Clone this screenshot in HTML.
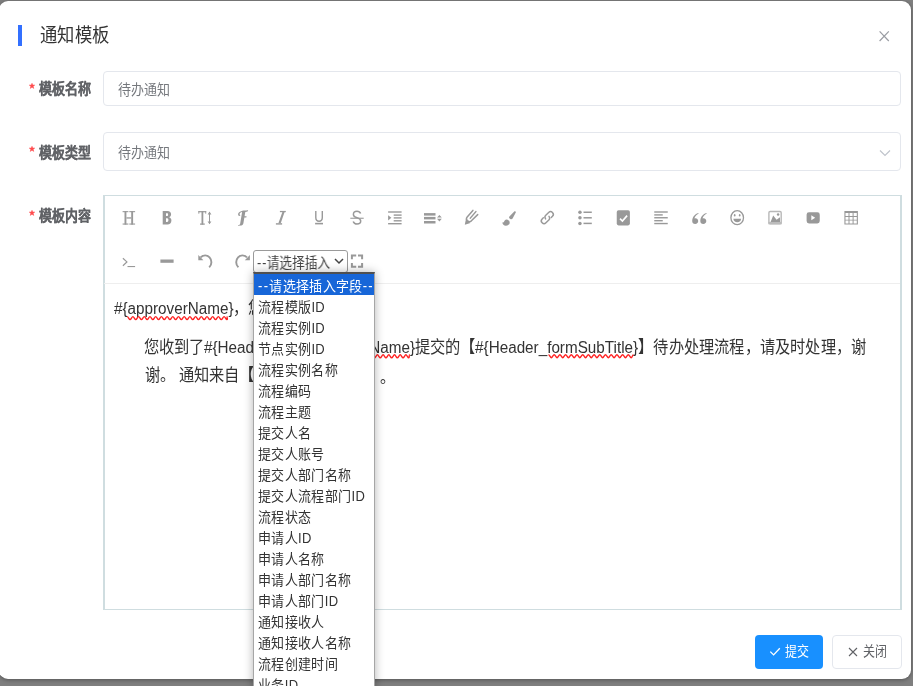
<!DOCTYPE html>
<html lang="zh-CN"><head><meta charset="utf-8">
<style>
*{margin:0;padding:0;box-sizing:border-box}
html,body{width:913px;height:686px;overflow:hidden}
body{background:#7f7f7f;font-family:"Liberation Sans",sans-serif;position:relative}
.abs{position:absolute}
.t{transform:scaleY(1.12);transform-origin:0 50%;will-change:transform}
#modal{position:absolute;left:-1px;top:1px;width:912px;height:678px;background:#fff;border-radius:9px;box-shadow:0 1px 4px rgba(0,0,0,.35)}
.bar{left:18px;top:24.5px;width:3.8px;height:21.5px;background:#3370ff}
.title{left:40px;top:22px;font-size:17px;line-height:26px;color:#333;white-space:nowrap}
.lbl{font-size:13px;font-weight:bold;color:#606266;-webkit-text-stroke:.12px #606266;white-space:nowrap;line-height:20px}
.star{color:#f56c6c;font-size:14px;line-height:20px}
.inp{left:103px;width:798px;border:1px solid #e4e7ed;border-radius:4px;background:#fff}
.itxt{font-size:13px;color:#75787d;white-space:nowrap;line-height:20px}
#editor{left:103px;top:195px;width:799px;height:415px;border:1px solid #cfdde0;border-left-width:2px;border-right-width:2px}
.sep{left:104px;top:283px;width:796px;height:1px;background:#eee}
.ic{position:absolute}
.ctext{font-size:15.25px;color:#333;white-space:nowrap;line-height:20px}
#sel{left:253px;top:250px;width:95px;height:23px;border:1px solid #9a9a9a;border-radius:3px;background:#fff}
#list{left:253px;top:272px;width:122px;height:420px;background:#fff;border:1px solid #a6a6a6;border-top:2px solid #505050;box-shadow:0 0 9px rgba(0,0,0,.3)}
.opt span{display:inline-block;transform:translateY(1.3px) scaleY(1.09);transform-origin:0 50%;will-change:transform}
.opt{height:21px;line-height:21px;font-size:13px;color:#333;padding-left:4px;white-space:nowrap;letter-spacing:.35px}
.opt.on{background:#1766d8;color:#fff}
.hy{font-style:normal;letter-spacing:1.3px}
.btn{top:634.5px;height:34px;border-radius:4px}
.bt{font-size:12px;line-height:20px;white-space:nowrap}
.seltxt{font-size:13px;line-height:20px;color:#444;white-space:nowrap}
</style></head><body>
<div id="modal"></div>
<div class="abs bar"></div>
<div class="abs title t" style="top:23px;transform:scale(1.02,1.12)">通知模板</div>
<svg class="abs" style="left:878px;top:30px" width="12" height="12" viewBox="0 0 12 12"><path d="M1.6 1.3L10.8 11M10.8 1.3L1.6 11" stroke="#9a9da3" stroke-width="1.2" fill="none"/></svg>

<svg class="abs" style="left:28.5px;top:82.7px" width="6" height="6" viewBox="0 0 6 6"><path d="M3 0.3L3.75 2.05L5.75 2.1L4.2 3.35L4.75 5.4L3 4.25L1.25 5.4L1.8 3.35L0.25 2.1L2.25 2.05Z" fill="#ff4d4f" stroke="#ff4d4f" stroke-width="0.5" stroke-linejoin="round"/></svg>
<div class="abs lbl t" style="left:38.5px;top:80px">模板名称</div>
<div class="abs inp" style="top:71px;height:35px"></div>
<div class="abs itxt t" style="left:118px;top:81px">待办通知</div>

<svg class="abs" style="left:28.5px;top:146.3px" width="6" height="6" viewBox="0 0 6 6"><path d="M3 0.3L3.75 2.05L5.75 2.1L4.2 3.35L4.75 5.4L3 4.25L1.25 5.4L1.8 3.35L0.25 2.1L2.25 2.05Z" fill="#ff4d4f" stroke="#ff4d4f" stroke-width="0.5" stroke-linejoin="round"/></svg>
<div class="abs lbl t" style="left:38.5px;top:144px">模板类型</div>
<div class="abs inp" style="top:132px;height:39px"></div>
<div class="abs itxt t" style="left:118px;top:144px">待办通知</div>
<svg class="abs" style="left:879px;top:149px" width="12" height="8" viewBox="0 0 12 8"><path d="M1 1.5L6 6.5L11 1.5" stroke="#c0c4cc" stroke-width="1.2" fill="none"/></svg>

<svg class="abs" style="left:28.5px;top:209.7px" width="6" height="6" viewBox="0 0 6 6"><path d="M3 0.3L3.75 2.05L5.75 2.1L4.2 3.35L4.75 5.4L3 4.25L1.25 5.4L1.8 3.35L0.25 2.1L2.25 2.05Z" fill="#ff4d4f" stroke="#ff4d4f" stroke-width="0.5" stroke-linejoin="round"/></svg>
<div class="abs lbl t" style="left:38.5px;top:207px">模板内容</div>
<div class="abs" id="editor"></div>
<div class="abs sep"></div>
<svg class="abs" style="left:0;top:0" width="913" height="686" viewBox="0 0 913 686">
<g fill="#999" stroke="none">
<!-- H -->
<rect x="124.5" y="211.1" width="1.9" height="13.5"/><rect x="131.2" y="211.1" width="1.9" height="13.5"/>
<rect x="122.6" y="211.1" width="5.8" height="1.1"/><rect x="129.3" y="211.1" width="5.8" height="1.1"/>
<rect x="122.6" y="223.5" width="5.8" height="1.1"/><rect x="129.3" y="223.5" width="5.8" height="1.1"/>
<rect x="126.4" y="217.3" width="4.8" height="1.3"/>
<!-- B -->
<path fill-rule="evenodd" d="M162.7 210.9H167.4C169.9 210.9 171.1 212.2 171.1 214.2C171.1 215.7 170.3 216.7 169.1 217.2C170.6 217.6 171.4 218.8 171.4 220.5C171.4 223 169.8 224.4 167.4 224.4H162.7Z M166 213.2H167C167.8 213.2 168.1 213.7 168.1 214.5C168.1 215.4 167.7 216.1 166.9 216.1H166Z M166 218.3H167.2C168.1 218.3 168.4 219 168.4 220.1C168.4 221.3 168 222.1 167.1 222.1H166Z"/>
<!-- T arrows -->
<rect x="198.4" y="211.1" width="7.8" height="1.2"/><rect x="198.4" y="211.1" width="0.9" height="2.6"/><rect x="205.3" y="211.1" width="0.9" height="2.6"/>
<rect x="201.5" y="211.1" width="1.8" height="13.5"/><rect x="200" y="223.5" width="4.8" height="1.2"/>
<rect x="209" y="212.5" width="1" height="10.8"/>
<path d="M207.6 214.4L209.5 211.6L211.4 214.4Z M207.6 221.4L209.5 224.2L211.4 221.4Z"/>
<!-- script F -->
<path d="M241.2 211.2C242.5 210.6 244.5 210.5 246.2 210.5C247 210.5 247.7 210.3 248.1 210.1L247.6 211.6C246.8 211.9 246 211.9 245.3 211.9L243.4 223.2C243.2 224.3 242.4 225.2 241.2 225.6L237.9 225.8L238.3 225.1C239.3 225 240 224.4 240.2 223.4L242.1 212.1C240.7 212.3 239.6 213.1 239.6 214.1C239.6 214.8 240 215.3 240.6 215.5L239.2 216.1C238.4 215.6 238.1 215 238.1 214.2C238.1 212.8 239.3 211.8 241.2 211.2Z M242.4 216.2H246.6L246.3 217.6H242.2Z"/>
<!-- I italic -->
<rect x="279.9" y="210.9" width="5.9" height="1.3" transform="skewX(0)"/>
<rect x="275.9" y="223.2" width="6.2" height="1.4"/>
<path d="M282.4 212.1H284.6L280.7 223.3H278.4Z"/>
<!-- U -->
<path d="M315.8 211.1V217.6C315.8 220 317 221.3 319.05 221.3C321.1 221.3 322.3 220 322.3 217.6V211.1" fill="none" stroke="#999" stroke-width="1.4"/>
<rect x="315.1" y="222.8" width="7.9" height="1.6"/>
<!-- S -->
<path d="M360.6 213.6C360 212 358.6 211.3 357 211.3C354.9 211.3 353.4 212.6 353.4 214.4C353.4 216.2 354.8 217 357 217.6C359.4 218.3 360.7 219.2 360.7 221C360.7 222.9 359.1 224 357 224C355.1 224 353.8 223.1 353.2 221.4" fill="none" stroke="#999" stroke-width="1.5"/>
<rect x="350.3" y="217.7" width="13.4" height="1.1"/>
<!-- indent -->
<rect x="388.1" y="211.3" width="13.5" height="1.4"/><rect x="393.7" y="214.4" width="7.9" height="1.4"/><rect x="393.7" y="217.2" width="7.9" height="1.4"/><rect x="393.7" y="220.1" width="7.9" height="1.4"/><rect x="388.1" y="223" width="13.5" height="1.4"/>
<path d="M388.1 215.2L391.4 217.85L388.1 220.5Z"/>
<!-- line height -->
<rect x="424" y="213.1" width="11.5" height="2.5"/><rect x="424" y="216.9" width="11.5" height="2.5"/><rect x="424" y="221" width="11.5" height="2.5"/>
<path d="M437 217.6L439.4 214.9L441.8 217.6Z M437 218.8L439.4 221.5L441.8 218.8Z"/>
<!-- pencil -->
<g fill="none" stroke="#999" stroke-linecap="round">
<path d="M472.9 210.4L467.2 216.9C466.4 217.9 466.3 219.6 467.2 220.6C468.3 221.7 470.2 221.8 471.4 220.8L477.7 214.6" stroke-width="1.5"/>
<path d="M476 211.5L470.2 218.2" stroke-width="1.3"/>
</g>
<path d="M464.8 224.8L465.9 219.2L470.4 222.9Z"/>
<!-- brush -->
<path d="M514.5 211.2C515.4 211 516.1 211.7 515.8 212.6L512.6 218.6C512.1 219.4 511 219.6 510.3 219L509.6 218.4C509 217.9 508.9 217 509.4 216.4Z"/>
<path d="M506.4 219.4C508.3 219.4 509.7 220.8 509.7 222.5C509.7 224.5 508 225.7 505.8 225.7C503.9 225.7 502.5 224.6 502.3 222.3C503 222.8 503.7 222.6 504 221.8C504.5 220.3 505.2 219.4 506.4 219.4Z"/>
<!-- link -->
<g transform="translate(547.3 217.6) rotate(-45)" fill="none" stroke="#999" stroke-width="1.45" stroke-linecap="round">
<path d="M-2.1 -0.3Q-1.7 -2.7 0.2 -2.7H4.6A2.7 2.7 0 0 1 4.6 2.7H2.9"/>
<path d="M2.1 0.3Q1.7 2.7 -0.2 2.7H-4.6A2.7 2.7 0 0 1 -4.6 -2.7H-2.9"/>
</g>
<!-- list -->
<circle cx="579.95" cy="212.25" r="1.75"/><circle cx="579.95" cy="217.8" r="1.75"/><circle cx="579.95" cy="223.4" r="1.75"/>
<rect x="583.5" y="211.5" width="8.3" height="1.5"/><rect x="583.5" y="217.05" width="8.3" height="1.5"/><rect x="583.5" y="222.65" width="8.3" height="1.5"/>
<!-- todo -->
<rect x="616.75" y="210.3" width="13.15" height="15.1" rx="1.8"/>
<path d="M620 218.6L622.4 221L627.1 215.6" fill="none" stroke="#fff" stroke-width="1.6"/>
<!-- align left -->
<rect x="654.25" y="211.3" width="13.5" height="1.4"/><rect x="654.25" y="214.2" width="8.5" height="1.4"/><rect x="654.25" y="217.05" width="13.5" height="1.4"/><rect x="654.25" y="220" width="8.5" height="1.4"/><rect x="654.25" y="222.85" width="13.5" height="1.4"/>
<!-- quote -->
<path d="M698.2 212.9C695 214 692.4 216.7 692.2 220.7C692.1 222.8 693.4 224 695.2 224C697 224 698.2 222.8 698.2 221.1C698.2 219.4 697 218.2 695.4 218.2C695 218.2 694.7 218.3 694.4 218.4C694.9 216.4 696.4 214.8 698.6 213.8Z"/><path d="M 706.30 212.90 C 703.10 214.00 700.50 216.70 700.30 220.70 C 700.20 222.80 701.50 224.00 703.30 224.00 C 705.10 224.00 706.30 222.80 706.30 221.10 C 706.30 219.40 705.10 218.20 703.50 218.20 C 703.10 218.20 702.80 218.30 702.50 218.40 C 703.00 216.40 704.50 214.80 706.70 213.80 Z"/>
<!-- emoji -->
<ellipse cx="737.2" cy="217.7" rx="6.3" ry="7" fill="none" stroke="#999" stroke-width="1.3"/>
<ellipse cx="734.7" cy="215.3" rx="0.8" ry="1.2"/><ellipse cx="739.7" cy="215.3" rx="0.8" ry="1.2"/>
<path d="M733.4 218.8H741.1C741.1 220.8 739.4 222.2 737.25 222.2C735.1 222.2 733.4 220.8 733.4 218.8Z"/>
<!-- image -->
<rect x="768.9" y="211.5" width="12.3" height="12.3" rx="1.2" fill="none" stroke="#b8b8b8" stroke-width="1.4"/>
<rect x="768.4" y="221.9" width="13.3" height="2.4" fill="#bcbcbc"/>
<path d="M770.6 221.9L773.2 215.6L776.6 219.8L780 217.2V221.9Z" fill="#9a9a9a"/>
<circle cx="778.1" cy="214.6" r="1.25" fill="#9a9a9a"/>
<!-- video -->
<rect x="806.6" y="212.25" width="13.15" height="11.15" rx="2.4"/>
<path d="M811.3 215.2L815.2 217.7L811.3 220.2Z" fill="#fff"/>
<!-- table -->
<path fill-rule="evenodd" d="M844.4 210.9H857.9V224.4H844.4Z M845.5 213.1H848.5V216.0H845.5Z M849.5 213.1H852.6V216.0H849.5Z M853.6 213.1H856.8V216.0H853.6Z M845.5 216.9H848.5V219.7H845.5Z M849.5 216.9H852.6V219.7H849.5Z M853.6 216.9H856.8V219.7H853.6Z M845.5 220.6H848.5V223.4H845.5Z M849.5 220.6H852.6V223.4H849.5Z M853.6 220.6H856.8V223.4H853.6Z"/>
<!-- row 2: code -->
<path d="M122.9 258.2L126.9 261.9L122.9 265.7" fill="none" stroke="#999" stroke-width="1.2"/>
<rect x="127.5" y="266" width="7.6" height="1.1"/>
<!-- hr -->
<rect x="160.4" y="259.5" width="13.2" height="3.3"/>
<!-- undo -->
<path d="M209.2 267.3C210.6 266 211.4 264.2 211.4 262.2C211.4 258.2 208.5 255.4 205.2 255.4C203.4 255.4 201.8 256.2 200.6 257.4" fill="none" stroke="#999" stroke-width="1.9"/>
<path d="M198.3 254.9V260.2H203.4Z"/>
<!-- redo -->
<path d="M238.4 267.3C237 266 236.2 264.2 236.2 262.2C236.2 258.2 239.1 255.4 242.4 255.4C244.2 255.4 245.8 256.2 247 257.4" fill="none" stroke="#999" stroke-width="1.9"/>
<path d="M249.9 254.9V260.2H244.8Z"/>
<!-- fullscreen -->
<path d="M351.9 259.3V255.6H356.2 M358 255.6H362.1V259.3 M362.1 263V266.7H358 M356.2 266.7H351.9V263" fill="none" stroke="#999" stroke-width="2"/>
</g>
</svg>


<div class="abs ctext t" style="left:114px;top:298px">#{approverName}<span style="margin-left:-1px">，</span>您</div>
<div class="abs ctext t" style="left:144px;top:337px">您收到了#{Header_formApplicantName}提交的【#{Header_formSubTitle}<span style="letter-spacing:.2px">】待办处理流程，请及时处理，谢</span></div>
<div class="abs ctext t" style="left:145px;top:365px">谢。 通知来自【<span style="display:inline-block;width:114px"></span>】<span style="position:relative;left:5px;top:1.5px">。</span></div>

<svg class="abs" style="left:0;top:0" width="913" height="686"><g fill="none" stroke="#f22" stroke-width="1.4"><path d="M127.20 316.60 C128.23 316.60 129.02 319.60 130.05 319.60 C131.08 319.60 131.87 316.60 132.90 316.60 C133.93 316.60 134.72 319.60 135.75 319.60 C136.78 319.60 137.57 316.60 138.60 316.60 C139.63 316.60 140.42 319.60 141.45 319.60 C142.48 319.60 143.27 316.60 144.30 316.60 C145.33 316.60 146.12 319.60 147.15 319.60 C148.18 319.60 148.97 316.60 150.00 316.60 C151.03 316.60 151.82 319.60 152.85 319.60 C153.88 319.60 154.67 316.60 155.70 316.60 C156.73 316.60 157.52 319.60 158.55 319.60 C159.58 319.60 160.37 316.60 161.40 316.60 C162.43 316.60 163.22 319.60 164.25 319.60 C165.28 319.60 166.07 316.60 167.10 316.60 C168.13 316.60 168.92 319.60 169.95 319.60 C170.98 319.60 171.77 316.60 172.80 316.60 C173.83 316.60 174.62 319.60 175.65 319.60 C176.68 319.60 177.47 316.60 178.50 316.60 C179.53 316.60 180.32 319.60 181.35 319.60 C182.38 319.60 183.17 316.60 184.20 316.60 C185.23 316.60 186.02 319.60 187.05 319.60 C188.08 319.60 188.87 316.60 189.90 316.60 C190.93 316.60 191.72 319.60 192.75 319.60 C193.78 319.60 194.57 316.60 195.60 316.60 C196.63 316.60 197.42 319.60 198.45 319.60 C199.48 319.60 200.27 316.60 201.30 316.60 C202.33 316.60 203.12 319.60 204.15 319.60 C205.18 319.60 205.97 316.60 207.00 316.60 C208.03 316.60 208.82 319.60 209.85 319.60 C210.88 319.60 211.67 316.60 212.70 316.60 C213.73 316.60 214.52 319.60 215.55 319.60 C216.58 319.60 217.37 316.60 218.40 316.60 C219.43 316.60 220.22 319.60 221.25 319.60 C222.28 319.60 223.07 316.60 224.10 316.60 C225.13 316.60 225.92 319.60 226.95 319.60 C227.98 319.60 226.47 316.60 227.50 316.60"/><path d="M366.00 354.80 C367.03 354.80 367.82 357.80 368.85 357.80 C369.88 357.80 370.67 354.80 371.70 354.80 C372.73 354.80 373.52 357.80 374.55 357.80 C375.58 357.80 376.37 354.80 377.40 354.80 C378.43 354.80 379.22 357.80 380.25 357.80 C381.28 357.80 382.07 354.80 383.10 354.80 C384.13 354.80 384.92 357.80 385.95 357.80 C386.98 357.80 387.77 354.80 388.80 354.80 C389.83 354.80 390.62 357.80 391.65 357.80 C392.68 357.80 393.47 354.80 394.50 354.80 C395.53 354.80 396.32 357.80 397.35 357.80 C398.38 357.80 399.17 354.80 400.20 354.80 C401.23 354.80 402.02 357.80 403.05 357.80 C404.08 357.80 404.87 354.80 405.90 354.80 C406.93 354.80 407.72 357.80 408.75 357.80 C409.78 357.80 408.77 354.80 409.80 354.80"/><path d="M548.50 354.70 C549.53 354.70 550.32 357.70 551.35 357.70 C552.38 357.70 553.17 354.70 554.20 354.70 C555.23 354.70 556.02 357.70 557.05 357.70 C558.08 357.70 558.87 354.70 559.90 354.70 C560.93 354.70 561.72 357.70 562.75 357.70 C563.78 357.70 564.57 354.70 565.60 354.70 C566.63 354.70 567.42 357.70 568.45 357.70 C569.48 357.70 570.27 354.70 571.30 354.70 C572.33 354.70 573.12 357.70 574.15 357.70 C575.18 357.70 575.97 354.70 577.00 354.70 C578.03 354.70 578.82 357.70 579.85 357.70 C580.88 357.70 581.67 354.70 582.70 354.70 C583.73 354.70 584.52 357.70 585.55 357.70 C586.58 357.70 587.37 354.70 588.40 354.70 C589.43 354.70 590.22 357.70 591.25 357.70 C592.28 357.70 593.07 354.70 594.10 354.70 C595.13 354.70 595.92 357.70 596.95 357.70 C597.98 357.70 598.77 354.70 599.80 354.70 C600.83 354.70 601.62 357.70 602.65 357.70 C603.68 357.70 604.47 354.70 605.50 354.70 C606.53 354.70 607.32 357.70 608.35 357.70 C609.38 357.70 610.17 354.70 611.20 354.70 C612.23 354.70 613.02 357.70 614.05 357.70 C615.08 357.70 615.87 354.70 616.90 354.70 C617.93 354.70 618.72 357.70 619.75 357.70 C620.78 357.70 621.57 354.70 622.60 354.70 C623.63 354.70 624.42 357.70 625.45 357.70 C626.48 357.70 627.27 354.70 628.30 354.70 C629.33 354.70 630.12 357.70 631.15 357.70 C632.18 357.70 632.47 354.70 633.50 354.70"/></g></svg>
<div class="abs" id="sel"></div>
<div class="abs seltxt t" style="left:257px;top:253.5px;transform:scale(.975,1.1)"><i class="hy" style="letter-spacing:.9px">--</i>请选择插入</div>
<svg class="abs" style="left:334px;top:257px" width="10" height="8" viewBox="0 0 10 8"><path d="M1 2L5 6L9 2" stroke="#444" stroke-width="1.5" fill="none"/></svg>
<div class="abs" id="list">
<div class="opt on"><span><i class="hy">--</i>请选择插入字段<i class="hy">--</i></span></div>
<div class="opt"><span>流程模版ID</span></div>
<div class="opt"><span>流程实例ID</span></div>
<div class="opt"><span>节点实例ID</span></div>
<div class="opt"><span>流程实例名称</span></div>
<div class="opt"><span>流程编码</span></div>
<div class="opt"><span>流程主题</span></div>
<div class="opt"><span>提交人名</span></div>
<div class="opt"><span>提交人账号</span></div>
<div class="opt"><span>提交人部门名称</span></div>
<div class="opt"><span>提交人流程部门ID</span></div>
<div class="opt"><span>流程状态</span></div>
<div class="opt"><span>申请人ID</span></div>
<div class="opt"><span>申请人名称</span></div>
<div class="opt"><span>申请人部门名称</span></div>
<div class="opt"><span>申请人部门ID</span></div>
<div class="opt"><span>通知接收人</span></div>
<div class="opt"><span>通知接收人名称</span></div>
<div class="opt"><span>流程创建时间</span></div>
<div class="opt"><span>业务ID</span></div>
</div>

<div class="abs btn" style="left:755px;width:68px;background:#1890ff"></div>
<div class="abs btn" style="left:832px;width:70px;background:#fff;border:1px solid #e4e7ed"></div>
<svg class="abs" style="left:769px;top:646px" width="12" height="11" viewBox="0 0 12 11"><path d="M1.3 5.6L4.6 8.9L10.8 2.2" stroke="#fff" stroke-width="1.3" fill="none"/></svg>
<div class="abs bt t" style="left:785px;top:642px;color:#fff">提交</div>
<svg class="abs" style="left:848px;top:647px" width="10" height="10" viewBox="0 0 10 10"><path d="M1 1L9 9M9 1L1 9" stroke="#606266" stroke-width="1.1" fill="none"/></svg>
<div class="abs bt t" style="left:863px;top:642px;color:#606266">关闭</div>
</body></html>
